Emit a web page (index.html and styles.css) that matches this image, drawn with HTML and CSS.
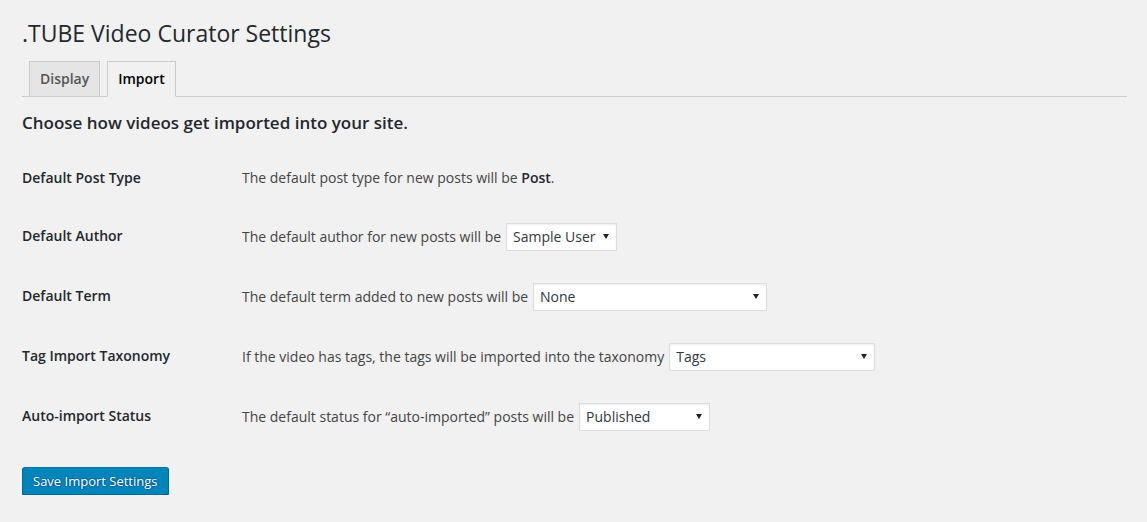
FILE: index.html
```html
<!DOCTYPE html>
<html lang="en">
<head>
<meta charset="utf-8">
<title>.TUBE Video Curator Settings</title>
<link rel="stylesheet" href="styles.css">
</head>
<body>
<div class="wrap">
  <h1 class="page-title">.TUBE Video Curator Settings</h1>
  <nav class="tabs">
    <a class="tab" href="#">Display</a>
    <a class="tab tab-active" href="#">Import</a>
  </nav>
  <h2 class="section-title">Choose how videos get imported into your site.</h2>
  <form class="form-table">
    <div class="row">
      <div class="label">Default Post Type</div>
      <div class="value"><span>The default post type for new posts will be <strong>Post</strong>.</span></div>
    </div>
    <div class="row">
      <div class="label">Default Author</div>
      <div class="value"><span>The default author for new posts will be</span>
        <span class="select select-author"><select><option>Sample User</option></select></span></div>
    </div>
    <div class="row">
      <div class="label">Default Term</div>
      <div class="value"><span>The default term added to new posts will be</span>
        <span class="select select-term"><select><option>None</option></select></span></div>
    </div>
    <div class="row">
      <div class="label">Tag Import Taxonomy</div>
      <div class="value"><span>If the video has tags, the tags will be imported into the taxonomy</span>
        <span class="select select-tags"><select><option>Tags</option></select></span></div>
    </div>
    <div class="row">
      <div class="label">Auto-import Status</div>
      <div class="value"><span>The default status for “auto-imported” posts will be</span>
        <span class="select select-status"><select><option>Published</option></select></span></div>
    </div>
    <div class="submit">
      <button type="button" class="btn-primary">Save Import Settings</button>
    </div>
  </form>
</div>
</body>
</html>
```
FILE: styles.css
```css
* { box-sizing: border-box; }

body {
  margin: 0;
  background: #f1f1f1;
  font-family: "Open Sans", "Liberation Sans", sans-serif;
  font-size: 13px;
  line-height: 1.4em;
  color: #444;
}

.wrap {
  margin: 10px 20px 0 22px;
}

.page-title {
  margin: 0;
  padding: 9px 0 4px;
  font-size: 23px;
  font-weight: 400;
  line-height: 29px;
  color: #23282d;
}

.tabs {
  display: flex;
  align-items: flex-end;
  padding-top: 9px;
  border-bottom: 1px solid #ccc;
}

.tab {
  margin-left: 7px;
  padding: 5px 10px;
  border: 1px solid #ccc;
  border-bottom: none;
  background: #e5e5e5;
  font-size: 14px;
  font-weight: 600;
  line-height: 24px;
  color: #555;
  text-decoration: none;
}

.tab-active {
  background: #f1f1f1;
  color: #000;
  border-bottom: 1px solid #f1f1f1;
  margin-bottom: -1px;
}

.section-title {
  margin: 16px 0 0;
  font-size: 17px;
  font-weight: 600;
  line-height: 20px;
  color: #23282d;
}

.form-table {
  display: block;
  margin-top: 16px;
}

.row {
  display: flex;
  align-items: flex-start;
}

.label {
  width: 210px;
  flex: none;
  padding: 20px 10px 20px 0;
  font-size: 14px;
  font-weight: 600;
  line-height: 1.3;
  color: #23282d;
}

.value {
  display: flex;
  align-items: center;
  align-self: center;
  padding: 15px 10px;
  font-size: 14px;
  line-height: 1.3;
  color: #444;
}

.value strong {
  font-weight: 600;
  color: #23282d;
}

.select {
  position: relative;
  display: block;
  margin: 1px 1px 1px 5px;
  height: 28px;
}

.select select {
  display: block;
  width: 100%;
  height: 28px;
  margin: 0;
  padding: 0 16px 0 6px;
  border: 1px solid #ddd;
  border-radius: 0;
  box-shadow: inset 0 1px 2px rgba(0, 0, 0, 0.07);
  background: #fff;
  font-family: "Open Sans", "Liberation Sans", sans-serif;
  font-size: 14px;
  line-height: 26px;
  color: #32373c;
  -webkit-appearance: none;
  appearance: none;
  outline: none;
}

.select::after {
  content: "";
  position: absolute;
  right: 8px;
  top: 11px;
  width: 0;
  height: 0;
  border-left: 3px solid transparent;
  border-right: 3px solid transparent;
  border-top: 5px solid #222;
  pointer-events: none;
}

.select-author { width: 111px; }
.select-term { width: 234px; }
.select-tags { width: 206px; }
.select-status { width: 131px; }

.submit {
  margin-top: 20px;
}

.btn-primary {
  display: inline-block;
  height: 28px;
  margin: 0;
  padding: 0 10px 1px;
  border: 1px solid;
  border-color: #0073aa #006799 #006799;
  border-radius: 3px;
  background: #0085ba;
  box-shadow: 0 1px 0 #006799;
  color: #fff;
  font-family: "Open Sans", "Liberation Sans", sans-serif;
  font-size: 13px;
  line-height: 26px;
  text-shadow: 0 -1px 1px #006799, 1px 0 1px #006799, 0 1px 1px #006799, -1px 0 1px #006799;
  cursor: pointer;
}
```
